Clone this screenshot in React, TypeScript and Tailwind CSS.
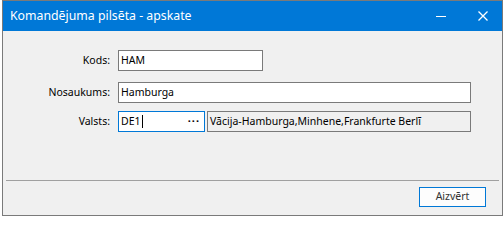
export default function App() {
  return (
    <div className="w-[503px] h-[218px] bg-white font-['Noto_Sans',sans-serif] text-[10.5px] text-black">
      <div className="ml-[2px] w-[501px] h-[216px] border border-[#7a7a7a] bg-[#f0f0f0] flex flex-col">
        {/* title bar */}
        <div className="h-[30px] shrink-0 bg-[#0078d7] flex items-center text-white">
          <span className="pl-[7px] text-[12.3px] leading-none">Komandējuma pilsēta - apskate</span>
          <div className="ml-auto flex items-center pr-[14px]">
            <svg width="10" height="10" viewBox="0 0 10 10" className="mr-[32px]">
              <path d="M0 5.5h10" stroke="white" strokeWidth="1" />
            </svg>
            <svg width="10" height="10" viewBox="0 0 10 10">
              <path d="M0.5 0.5l9 9M9.5 0.5l-9 9" stroke="white" strokeWidth="1.3" />
            </svg>
          </div>
        </div>

        {/* form */}
        <div className="flex flex-col pt-[19px]">
          <div className="flex items-center h-[21px]">
            <span className="w-[107px] text-right">Kods:</span>
            <div className="ml-[8px] w-[145px] h-[21px] border border-[#7a7a7a] bg-white flex items-center pl-[2px]">
              HAM
            </div>
          </div>
          <div className="flex items-center h-[21px] mt-[11px]">
            <span className="w-[107px] text-right">Nosaukums:</span>
            <div className="ml-[8px] w-[353px] h-[21px] border border-[#7a7a7a] bg-white flex items-center pl-[2px]">
              Hamburga
            </div>
          </div>
          <div className="flex items-center h-[21px] mt-[8px]">
            <span className="w-[107px] text-right">Valsts:</span>
            <div className="ml-[8px] w-[87px] h-[21px] border border-[#0078d7] bg-white flex items-center pl-[2px] pr-[4px]">
              <span>DE1</span>
              <span className="w-px h-[13px] bg-black ml-px" />
              <span className="ml-auto font-bold tracking-[1px] leading-none pb-[2px] text-[11px]">···</span>
            </div>
            <div className="ml-[2px] w-[264px] h-[21px] border border-[#7a7a7a] bg-[#f0f0f0] flex items-center pl-[2px] whitespace-nowrap overflow-hidden">
              Vācija-Hamburga,Minhene,Frankfurte Berlī
            </div>
          </div>
        </div>

        {/* footer */}
        <div className="mt-auto mx-[3px] h-px bg-[#a0a0a0]" />
        <div className="flex justify-end pt-[6px] pb-[8px] pr-[16px]">
          <button className="w-[67px] h-[20px] border border-[#0078d7] bg-[#fdfdfd] text-[#333] text-[10.5px]">
            Aizvērt
          </button>
        </div>
      </div>
    </div>
  );
}
